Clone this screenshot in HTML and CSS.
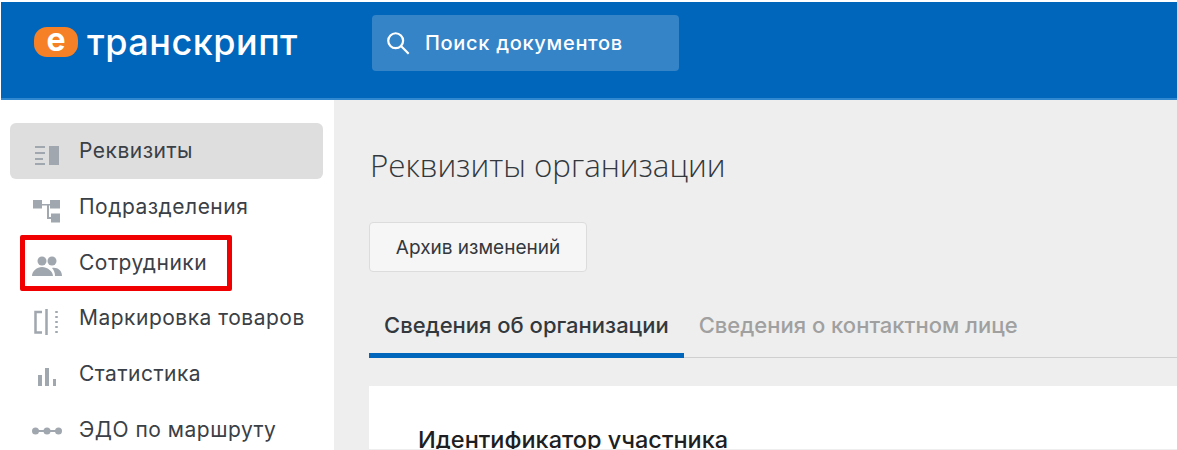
FILE: index.html
```html
<!DOCTYPE html>
<html lang="ru">

<head>
    <meta charset="UTF-8">
    <title>Реквизиты организации</title>
    <link rel="stylesheet" href="styles.css">
</head>

<body>
    <header class="topbar">
        <div class="logo">
            <span class="logo-mark">e</span>
            <span class="logo-text">транскрипт</span>
        </div>
        <div class="search">
            <svg class="search-icon" width="26" height="26" viewBox="0 0 28 28" fill="none" stroke="#fff" stroke-width="2.4">
                <circle cx="11.500" cy="11.500" r="8"></circle>
                <path d="M17.500 17.500l8 8"></path>
            </svg>
            <span>Поиск документов</span>
        </div>
    </header>

    <div class="layout">
        <nav class="sidebar">
            <a class="nav-item active">
                <svg class="nav-icon" width="32" height="34" viewBox="0 0 32 34" fill="#a0a7ae">
                    <path d="M4 12h10v2H4zM4 18h10v2H4zM4 24h8v2H4zM4 29h10v2H4zM18 12h10v19H18z"></path>
                </svg>
                <span>Реквизиты</span>
            </a>
            <a class="nav-item">
                <svg class="nav-icon" width="32" height="34" viewBox="0 0 32 34" fill="#a0a7ae">
                    <path d="M2 10h9v8.500H2zM11 14h8v1.500h-8zM19 10h10v8.500H19zM16 14h2v13h2v2h-4zM20 23.500h9v9h-9z"></path>
                </svg>
                <span>Подразделения</span>
            </a>
            <a class="nav-item">
                <svg class="nav-icon" width="32" height="34" viewBox="0 0 32 34" fill="#a0a7ae">
                    <circle cx="11" cy="16" r="4.500"></circle>
                    <circle cx="21" cy="16" r="4.500"></circle>
                    <path d="M1 31c0-5 5-9 10-9s11 4 11 9zM24 31c0-3-1-6-3-8 5-1 10 2 10 8z"></path>
                </svg>
                <span>Сотрудники</span>
                <span class="highlight"></span>
            </a>
            <a class="nav-item">
                <svg class="nav-icon" width="32" height="34" viewBox="0 0 32 34" fill="none" stroke="#a0a7ae" stroke-width="2.500">
                    <path d="M11 11H4.500v20.500H11M15.500 8v26"></path>
                    <path d="M25.500 10v22" stroke-dasharray="2 3"></path>
                </svg>
                <span>Маркировка товаров</span>
            </a>
            <a class="nav-item">
                <svg class="nav-icon" width="32" height="34" viewBox="0 0 32 34" fill="#a0a7ae">
                    <path d="M7 18h4v11H7zM14 11h4v18h-4zM22 22h3v7h-3z"></path>
                </svg>
                <span>Статистика</span>
            </a>
            <a class="nav-item">
                <svg class="nav-icon" width="32" height="34" viewBox="0 0 32 34" fill="#a0a7ae">
                    <circle cx="4.500" cy="19" r="3.500"></circle>
                    <circle cx="16" cy="19" r="3.500"></circle>
                    <circle cx="27.500" cy="19" r="3.500"></circle>
                    <path d="M4 18h24v2H4z"></path>
                </svg>
                <span>ЭДО по маршруту</span>
            </a>
        </nav>

        <main class="content">
            <h1 class="page-title">Реквизиты организации</h1>
            <button class="btn">Архив изменений</button>
            <div class="tabs">
                <div class="tab active">Сведения об организации</div>
                <div class="tab">Сведения о контактном лице</div>
            </div>
            <section class="card">
                <h3>Идентификатор участника</h3>
            </section>
        </main>
    </div>
</body>

</html>
```

FILE: styles.css
```css
html,
body {
    margin: 0;
    padding: 0;
    height: 450px;
    overflow: hidden;
    background-color: #fff;
    font-family: "Inter", "Liberation Sans", sans-serif;
}

.topbar {
    height: 96px;
    margin: 2px 0 0 1px;
    background-color: #0066bb;
    border-bottom: 2px solid #2f88d0;
    display: flex;
    align-items: flex-start;
}

.logo {
    width: 371px;
    padding: 25px 0 0 33px;
    box-sizing: border-box;
    display: flex;
    align-items: center;
    gap: 9px;
}

.logo-mark {
    width: 44px;
    height: 30px;
    border-radius: 13px;
    background-color: #f58025;
    color: #fff;
    font: 700 32px/26px "Inter", sans-serif;
    text-align: center;
}

.logo-text {
    color: #fff;
    font: 500 36px/30px "Inter", sans-serif;
    letter-spacing: 0.5px;
}

.search {
    width: 307px;
    height: 56px;
    margin-top: 13px;
    border-radius: 4px;
    background-color: #3584c8;
    color: #fff;
    font: 500 20px "Inter", sans-serif;
    letter-spacing: 0.7px;
    display: flex;
    align-items: center;
    padding-left: 13px;
    box-sizing: border-box;
    gap: 14px;
}

.layout {
    display: flex;
    height: 350px;
}

.sidebar {
    width: 334px;
    flex: none;
    padding: 23px 11px 0 10px;
    box-sizing: border-box;
    background-color: #fff;
}

.nav-item {
    height: 55.7px;
    display: flex;
    align-items: center;
    border-radius: 6px;
    font-size: 21px;
    letter-spacing: 0.5px;
    color: #3a4046;
    position: relative;
}

.nav-item.active {
    background-color: #dedede;
}

.nav-icon {
    margin: 0 16px 0 21px;
    flex: none;
}

.highlight {
    position: absolute;
    left: 10px;
    top: 1px;
    width: 212px;
    height: 56px;
    box-sizing: border-box;
    border: 5px solid #f00000;
    border-radius: 2px;
}

.content {
    flex: 1;
    background-color: #eeeeee;
    padding: 0 0 0 35px;
}

.page-title {
    margin: 45px 0 0 1px;
    font: 300 31.3px/40px "Open Sans", sans-serif;
    color: #33383d;
}

.btn {
    display: block;
    margin-top: 37px;
    width: 218px;
    height: 50px;
    border: 1px solid #dcdcdc;
    border-radius: 4px;
    background-color: #f6f6f6;
    color: #33383d;
    font: 400 19px "Inter", sans-serif;
}

.tabs {
    display: flex;
    margin-top: 26px;
    border-bottom: 1px solid #cfcfcf;
    height: 59px;
}

.tab {
    padding: 14px 15px 0;
    font-size: 22px;
    font-weight: 500;
    color: #a0a0a0;
}

.tab.active {
    color: #33383d;
    border-bottom: 5px solid #0066bb;
    height: 60px;
    box-sizing: border-box;
}

.card {
    margin-top: 28px;
    height: 63px;
    overflow: hidden;
    background-color: #fff;
    padding: 40px 49px 0;
    box-sizing: border-box;
}

.card h3 {
    margin: 0;
    font-size: 23.5px;
    line-height: 28px;
    font-weight: 500;
    color: #1d1f22;
}
```
